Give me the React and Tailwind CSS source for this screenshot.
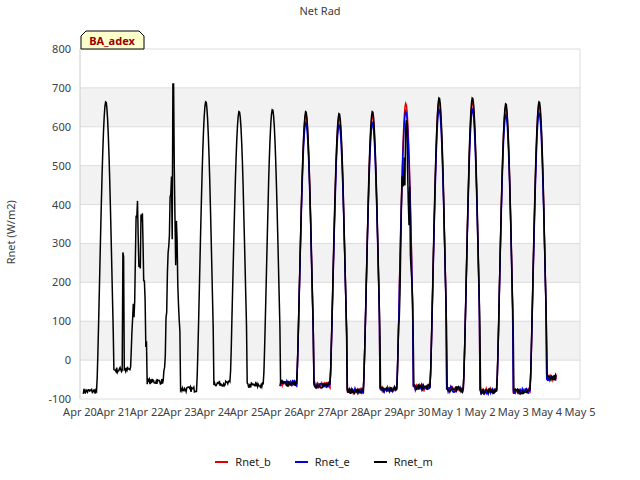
import React from "react";

const X0 = 80, X1 = 580, Y0 = 49, Y1 = 399;
const xs = (d) => X0 + (d / 15) * (X1 - X0);
const ys = (v) => Y1 - ((v + 100) / 900) * (Y1 - Y0);

function rng(seed) {
  let s = seed;
  return () => {
    s = (s * 16807) % 2147483647;
    return s / 2147483647;
  };
}

const peaks = [665, 470, 560, 665, 640, 645, 640, 635, 640, 670, 675, 675, 660, 665, 695];
const nights = [-80, -25, -55, -75, -60, -65, -60, -65, -80, -75, -70, -75, -80, -80, -45];

function series(kind) {
  const r = rng(kind === "m" ? 7 : kind === "b" ? 11 : 13);
  const pts = [];
  const start = kind === "m" ? 0.1 : 6.0;
  for (let t = start; t <= 14.3; t += 1 / 48) {
    const d = Math.floor(t);
    const f = t - d;
    let pk = peaks[d] ?? 650;
    if (kind === "e" && d >= 6) pk -= 30;
    if (kind === "b" && d >= 6) pk -= 10;
    const n = nights[d] ?? -70;
    const ph = (f - 0.5) / 0.55;
    let v = n + (r() - 0.5) * 14;
    if (ph > 0 && ph < 1) {
      v = n + (pk - n) * Math.pow(Math.sin(Math.PI * ph), 1.3);
      if (d === 1 || d === 2 || (d === 9 && kind === "m")) v -= r() * 250 * Math.sin(Math.PI * ph);
    }
    if (d === 2 && Math.abs(f - 0.8) < 0.02 && kind === "m") v = 710;
    if (d === 1 && Math.abs(f - 0.3) < 0.02) v = 160 + r() * 320;
    pts.push(`${xs(t).toFixed(1)},${ys(v).toFixed(1)}`);
  }
  return pts.join(" ");
}

const days = ["Apr 20","Apr 21","Apr 22","Apr 23","Apr 24","Apr 25","Apr 26","Apr 27","Apr 28","Apr 29","Apr 30","May 1","May 2","May 3","May 4","May 5"];

function LegendItem({ color, label }) {
  return (
    <div className="flex items-center gap-[7px]">
      <span className={`block w-[13px] h-[2px] ${color}`} />
      <span>{label}</span>
    </div>
  );
}

export default function App() {
  return (
    <div className="w-[640px] h-[480px] bg-white flex flex-col font-['DejaVu_Sans',sans-serif] text-[11px] text-[#404040]">
      <div className="h-[20px] flex items-center justify-center pt-[2px]">Net Rad</div>
      <div className="relative h-[420px]">
        <div className="absolute left-[11px] top-[204px] -rotate-90 origin-center -translate-x-1/2 w-[80px] text-center">Rnet (W/m2)</div>
        <svg width="640" height="420" viewBox="0 20 640 420" className="block">
          {[0, 2, 4, 6].map((k) => (
            <rect key={k} x={X0} y={ys(k * 100 + 100)} width={X1 - X0} height={ys(0) - ys(100)} fill="#f2f2f2" />
          ))}
          {[-100, 0, 100, 200, 300, 400, 500, 600, 700, 800].map((v) => (
            <g key={v}>
              <line x1={X0} x2={X1} y1={ys(v)} y2={ys(v)} stroke="#dcdcdc" strokeWidth="1" />
              <text x={X0 - 9} y={ys(v) + 4} textAnchor="end" fontSize="11" fill="#404040">{v}</text>
            </g>
          ))}
          <line x1={X0} x2={X0} y1={Y0} y2={Y1} stroke="#ccc" />
          <line x1={X1} x2={X1} y1={Y0} y2={Y1} stroke="#ddd" />
          {days.map((d, i) => (
            <text key={d} x={xs(i)} y={416} textAnchor="middle" fontSize="11" fill="#404040">{d}</text>
          ))}
          <polyline points={series("b")} fill="none" stroke="#e00000" strokeWidth="1.5" />
          <polyline points={series("e")} fill="none" stroke="#0000e0" strokeWidth="1.5" />
          <polyline points={series("m")} fill="none" stroke="#000" strokeWidth="1.5" />
          <path d="M81,49 L81,36 L86,31 L139,31 L144,36 L144,49 Z" fill="#ffffcc" stroke="#000" strokeWidth="1" />
          <text x="112" y="45" textAnchor="middle" fontSize="11" fontWeight="bold" fill="#990000">BA_adex</text>
        </svg>
      </div>
      <div className="h-[40px] flex justify-center items-start pt-[14px] gap-[24px] text-[#202020] pl-[8px]">
        <LegendItem color="bg-[#e00000]" label="Rnet_b" />
        <LegendItem color="bg-[#0000e0]" label="Rnet_e" />
        <LegendItem color="bg-black" label="Rnet_m" />
      </div>
    </div>
  );
}
